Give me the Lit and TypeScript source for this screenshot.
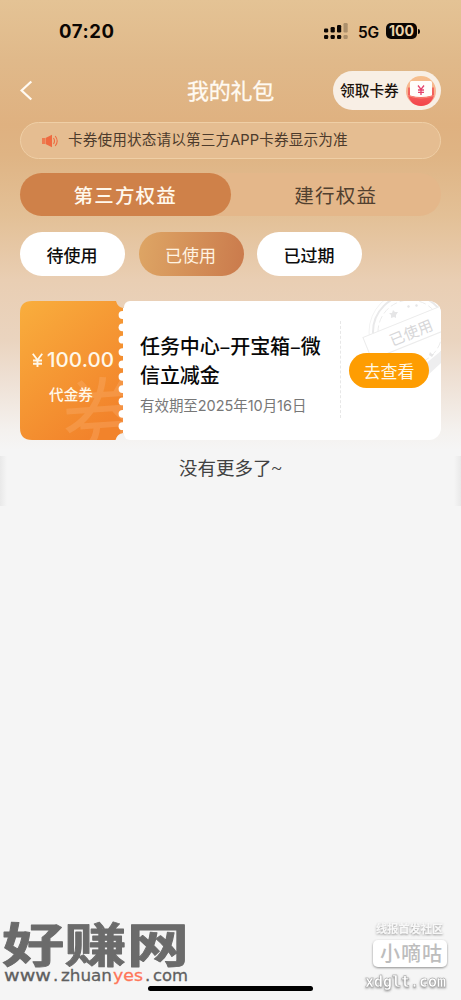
import { LitElement, html, svg, css } from "lit";
import { customElement, property, state } from "lit/decorators.js";
import { classMap } from "lit/directives/class-map.js";

@customElement("status-bar")
class StatusBar extends LitElement {
  static styles = css`
    :host { display: flex; justify-content: space-between; align-items: center; height: 62px; box-sizing: border-box; padding: 0 41px 0 59px; color: #0b0603; font-family: Inter, sans-serif; }
    .time { font-size: 18.5px; font-weight: 700; letter-spacing: 0.6px; }
    .right { display: flex; align-items: center; }
    .net { font-size: 15.500px; font-weight: 600; margin: 2px 7px 0 9px; width: 21px; letter-spacing: -0.2px; white-space: nowrap; }
    .signal { display: block; margin-top: 1px; margin-right: 1px; }
    .battery { width: 31px; height: 16px; border-radius: 5px; background: #0b0603; color: #ecd3ab; font-size: 14px; font-weight: 700; line-height: 16px; text-align: center; letter-spacing: 0.1px; }
    .cap { width: 2px; height: 5px; margin-left: 1px; border-radius: 0 2px 2px 0; background: #0b0603; }
  `;
  render() {
    return html`
      <div class="time">07:20</div>
      <div class="right">
        <svg class="signal" width="24" height="17" viewBox="0 0 24 17" fill="#0b0603">
          <rect x="0" y="5.5" width="4.2" height="4" rx="1.2" /><rect x="6.6" y="4" width="4.2" height="5.5" rx="1.2" />
          <rect x="13" y="2" width="4.2" height="7.5" rx="1.2" /><rect x="19.5" y="0" width="4.2" height="9.5" rx="1.2" opacity=".25" />
          <rect x="0" y="12" width="4.2" height="4" rx="1.2" /><rect x="6.6" y="12" width="4.2" height="4" rx="1.2" />
          <rect x="13" y="12" width="4.2" height="4" rx="1.2" /><rect x="19.5" y="12" width="4.2" height="4" rx="1.2" opacity=".25" />
        </svg>
        <div class="net">5G</div>
        <div class="battery">100</div><div class="cap"></div>
      </div>`;
  }
}

@customElement("nav-header")
class NavHeader extends LitElement {
  static styles = css`
    :host { display: grid; grid-template-columns: 1fr auto 1fr; align-items: center; height: 57px; padding: 0 20px; }
    .back { display: block; }
    .title { color: #fffaf2; font-size: 22px; line-height: 32px; letter-spacing: -0.2px; font-weight: 400; -webkit-text-stroke: 0.3px #fffaf2; margin-top: -4px; }
    .claim { justify-self: end; display: flex; align-items: center; justify-content: space-between; width: 108px; height: 39px; box-sizing: border-box; padding: 0 5px 0 7px; border-radius: 20px; background: #f8efe5; color: #1b120c; font-size: 14.7px; font-weight: 500; white-space: nowrap; }
    .label { margin-top: -2px; }
  `;
  render() {
    return html`
      <svg class="back" width="14" height="22" viewBox="0 0 14 22" fill="none" stroke="#fffaf2" stroke-width="2.3"><path d="M11.3 1.5 1.600 10.500l9.700 9" /></svg>
      <div class="title">我的礼包</div>
      <div class="claim">
        <span class="label">领取卡券</span>
        <svg width="30" height="32" viewBox="0 0 30 32">
          <defs>
            <linearGradient id="disc" x2="0" y2="1"><stop stop-color="#f6c08d" /><stop offset="1" stop-color="#f8a493" /></linearGradient>
            <linearGradient id="pocket" x2="0" y2="1"><stop stop-color="#f26d62" /><stop offset="1" stop-color="#f4434b" /></linearGradient>
          </defs>
          <circle cx="15" cy="16" r="15" fill="url(#disc)" />
          <path d="M2 12.500h26v8c-2 7-7 10.500-13 10.500S4 27.500 2 20.500z" fill="url(#pocket)" />
          <path d="M4 7.500q0-1.500 1.500-1.500h19q1.500 0 1.500 1.500v13q-11 3-22 0z" fill="#fffdfb" />
          <path d="M2 20.500q13 5 26 0" fill="none" stroke="#f88877" stroke-width="1" />
          <path d="M12 10.500 15 14.500l3-4M15 14.500v5.500M12 15h6M12 17.400h6" stroke="#e3436d" stroke-width="1.300" fill="none" />
        </svg>
      </div>`;
  }
}

@customElement("coupon-card")
class CouponCard extends LitElement {
  @property() amount = "";
  @property() kind = "";
  @property() name = "";
  @property() expiry = "";
  static styles = css`
    :host { display: grid; grid-template-columns: 104px 1fr 101px; height: 139px; position: relative; border-radius: 12px; }
    .value { position: relative; display: flex; flex-direction: column; align-items: center; color: #fff8e9; box-sizing: border-box; padding-top: 44px; }
    .ticket { position: absolute; inset: 0; z-index: 0; }
    .amount { position: relative; font-family: Inter, "Noto Sans CJK SC", sans-serif; font-size: 20.500px; line-height: 30px; font-weight: 500; white-space: nowrap; margin-left: 2px; display: flex; gap: 4px; align-items: baseline; letter-spacing: 0.1px; }
    .yen { display: block; }
    .kind { position: relative; font-size: 14.600px; line-height: 22px; margin-top: 8px; margin-right: 2px; font-weight: 500; }
    .info { position: relative; background: #fff; padding: 30px 0 0 16px; border-radius: 6px 0 0 6px; }
    .name { font-size: 20px; line-height: 29px; font-weight: 500; color: #080808; letter-spacing: -0.1px; white-space: pre-line; }
    .expiry { font-family: Inter, "Noto Sans CJK SC", sans-serif; font-size: 14.500px; line-height: 22px; color: #777; margin-top: 6px; letter-spacing: -0.05px; white-space: nowrap; }
    .action { position: relative; overflow: hidden; background: #fff; border-radius: 0 12px 12px 0; display: flex; align-items: center; padding-left: 9px; }
    .action::before { content: ""; position: absolute; left: 0; top: 20px; bottom: 22px; border-left: 1px dashed #e7e7e7; }
    .stamp { position: absolute; right: 0; top: 0; }
    .go { position: relative; width: 80px; height: 35px; border: 0; padding: 0; border-radius: 18px; background: #fe9d02; color: #fff8e8; font: inherit; font-size: 17px; line-height: 34px; }
  `;
  render() {
    const notches = Array.from({ length: 10 }, (_, i) => 14 + i * 12.35);
    return html`
      <div class="value">
        <svg class="ticket" width="104" height="139" viewBox="0 0 104 139">
          <defs>
            <linearGradient id="orange" x1="0" y1="0" x2=".65" y2="1"><stop stop-color="#f9ae3d" /><stop offset="1" stop-color="#f2832b" /></linearGradient>
            <clipPath id="shape"><path d="M12 0H96Q97.500 6 103 7V132Q97 133 95.500 139H12Q0 139 0 127V12Q0 0 12 0z" /></clipPath>
          </defs>
          <path d="M102.500 7H104V132H102.500z" fill="#fff" />
          <g clip-path="url(#shape)">
            <rect width="103" height="139" fill="url(#orange)" />
            <text x="41" y="147" font-size="84" fill="#f8b070" opacity=".36" transform="rotate(-4 80 105)">券</text>
          </g>
          ${notches.map((y) => svg`<circle cx="102.500" cy=${y} r="3.900" fill="#fff" />`)}
        </svg>
        <div class="amount">
          <svg class="yen" width="11" height="14" viewBox="0 0 11 14" fill="none" stroke="currentColor" stroke-width="1.900"><path d="M.8.8 5.500 7 10.200.8M5.500 7v7M1 7.500h9M1 10.800h9" /></svg>
          <span>${this.amount}</span>
        </div>
        <div class="kind">${this.kind}</div>
      </div>
      <div class="info">
        <div class="name">${this.name}</div>
        <div class="expiry">${this.expiry}</div>
      </div>
      <div class="action">
        <svg class="stamp" width="82" height="75" viewBox="0 0 82 75" fill="none" stroke="#e9e9ea">
          <circle cx="51" cy="31" r="41" stroke="#f3f3f3" />
          <circle cx="51" cy="31" r="37" stroke-width="2" />
          <circle cx="51" cy="31" r="32" stroke="#ececec" stroke-dasharray="7 3" />
          <path d="M60 68 82 50v12L68 75z" fill="#eeeeef" stroke="none" />
          <path d="m33 12 1-3 2 2 3 0-2 3 0 3-2-1-3 1 0-3-2-2zM48 6l1-2 2 1-1 2zM56 5l1-2 2 1-1 2zM70 54l1-3 2 2 2 0-2 3z" fill="#e6e6e7" stroke="none" />
          <g transform="rotate(-22 50 33)">
            <rect x="6" y="19" width="100" height="24" fill="#fff" stroke="#ececec" />
            <text x="30" y="38" font-size="15" fill="#d7d7d9" stroke="none">已使用</text>
          </g>
        </svg>
        <button class="go">去查看</button>
      </div>`;
  }
}

@customElement("site-marks")
class SiteMarks extends LitElement {
  static styles = css`
    :host { display: flex; justify-content: space-between; align-items: flex-end; height: 84px; position: relative; }
    .indicator { position: absolute; left: 148px; right: 148px; bottom: 9px; height: 5px; border-radius: 3px; background: #000; }
    .mark { display: block; }
  `;
  render() {
    return html`
      <svg class="mark" width="200" height="84" viewBox="0 0 200 84">
        <text x="2" y="57" font-size="58" font-weight="700" fill="#6b6b6b" stroke="#6b6b6b" stroke-width="1" stroke-linejoin="round" textLength="187" lengthAdjust="spacingAndGlyphs" transform="matrix(1 0 0 .8 0 .4)">好赚网</text>
        <text y="65" font-family="DejaVu Sans, sans-serif" font-size="16.500" fill="#606060" stroke="#606060" stroke-width=".3">
          <tspan x="4" textLength="47" lengthAdjust="spacingAndGlyphs">www</tspan><tspan x="53">.</tspan><tspan x="61" textLength="51" lengthAdjust="spacingAndGlyphs">zhuan</tspan><tspan x="113" fill="#ff7659" stroke="#ff7659" textLength="30" lengthAdjust="spacingAndGlyphs">yes</tspan><tspan x="145">.</tspan><tspan x="153" textLength="35" lengthAdjust="spacingAndGlyphs">com</tspan>
        </text>
      </svg>
      <svg class="mark" width="110" height="84" viewBox="0 0 110 84">
        <defs><filter id="drop" x="-10%" y="-20%" width="120%" height="160%"><feDropShadow dx="0" dy="1" stdDeviation="1" flood-color="#555" flood-opacity=".65" /></filter></defs>
        <g filter="url(#drop)">
          <text x="25" y="17" font-size="11" font-weight="700" fill="#f8f8f8" textLength="67">线报首发社区</text>
          <rect x="22" y="24" width="74" height="27" rx="5" fill="#fff" />
        </g>
        <text x="29" y="44.500" font-size="20" font-weight="500" fill="#bdbdbd" textLength="62">小嘀咕</text>
        <text x="14" y="71" font-family="DejaVu Sans Mono, monospace" font-size="15" font-weight="700" fill="#fff" filter="url(#drop)" stroke="#999" stroke-width=".4" textLength="81">xdglt.com</text>
      </svg>
      <div class="indicator"></div>`;
  }
}

@customElement("app-root")
class AppRoot extends LitElement {
  @state() tab = 0;
  @state() filter = 1;
  static styles = css`
    :host { display: flex; flex-direction: column; height: 1000px; overflow: hidden; color: #3b332c; font-family: "Noto Sans CJK SC", sans-serif; background: linear-gradient(180deg, #e4c395 0, #e0b98a 60px, #dfb180 125px, #dfb484 155px, #e3c096 215px, #e9ceb3 280px, #ead4bf 340px, #efe2d7 385px, #f4f1ee 430px, #f5f5f5 450px) #f5f5f5; }
    .page { padding: 3px 20px 0; }
    .notice { display: flex; align-items: center; gap: 9px; height: 37px; box-sizing: border-box; padding: 0 20px; border: 1.500px solid #efcfa6; border-radius: 19px; background: #e5bd91; color: #4d3b2c; font-size: 14.650px; letter-spacing: 0.1px; line-height: 22px; white-space: nowrap; }
    .words { margin-top: -2px; font-family: Inter, "Noto Sans CJK SC", sans-serif; }
    .tabs { display: grid; grid-template-columns: 1fr 1fr; height: 43px; margin-top: 14px; border-radius: 22px; background: #e4b78a; }
    .tab { border: 0; padding: 0; border-radius: 22px; background: transparent; color: #51402f; font: inherit; font-size: 19.500px; letter-spacing: 1.200px; line-height: 41px; }
    .tab.on { background: #cf8149; color: #fff8ec; font-weight: 500; }
    .filters { display: grid; grid-template-columns: repeat(3, 105px); gap: 13.500px; margin: 16px 0 25px; }
    .chip { height: 44px; border: 0; padding: 0 1px 0 0; border-radius: 22px; background: #fff; color: #0d0d0d; font: inherit; font-size: 17px; font-weight: 500; line-height: 43px; }
    .chip.on { background: linear-gradient(100deg, #dea665, #ca7a4c); color: #fff3e2; font-weight: 400; }
    .more { height: 50px; margin-top: 16px; box-sizing: border-box; text-align: center; font-size: 18.500px; line-height: 23px; color: #414141; background: linear-gradient(90deg, #e9e9e9, #f5f5f5 7px, #f5f5f5 454px, #e9e9e9); }
    .tilde { font-family: "Liberation Serif", serif; font-size: 19px; }
    .foot { margin-top: auto; }
  `;
  render() {
    return html`
      <status-bar></status-bar>
      <nav-header></nav-header>
      <main class="page">
        <div class="notice">
          <svg width="18" height="14" viewBox="0 0 18 14" fill="#ef6a40"><rect x="1" y="4" width="3" height="6" opacity=".8" /><path d="M4.500 4 11 .7v12.600L4.500 10z" /><path d="M12.500 4q2 3 0 6M14.200 2q4 5 0 10" fill="none" stroke="#ef6a40" stroke-width="1.100" /></svg>
          <span class="words">卡券使用状态请以第三方APP卡券显示为准</span>
        </div>
        <div class="tabs">
          ${["第三方权益", "建行权益"].map((t, i) => html`<button class=${classMap({ tab: true, on: i === this.tab })} @click=${() => (this.tab = i)}>${t}</button>`)}
        </div>
        <div class="filters">
          ${["待使用", "已使用", "已过期"].map((t, i) => html`<button class=${classMap({ chip: true, on: i === this.filter })} @click=${() => (this.filter = i)}>${t}</button>`)}
        </div>
        <coupon-card amount="100.00" kind="代金券" .name=${"任务中心–开宝箱–微\n信立减金"} expiry="有效期至2025年10月16日"></coupon-card>
      </main>
      <div class="more">没有更多了<span class="tilde">~</span></div>
      <site-marks class="foot"></site-marks>`;
  }
}
